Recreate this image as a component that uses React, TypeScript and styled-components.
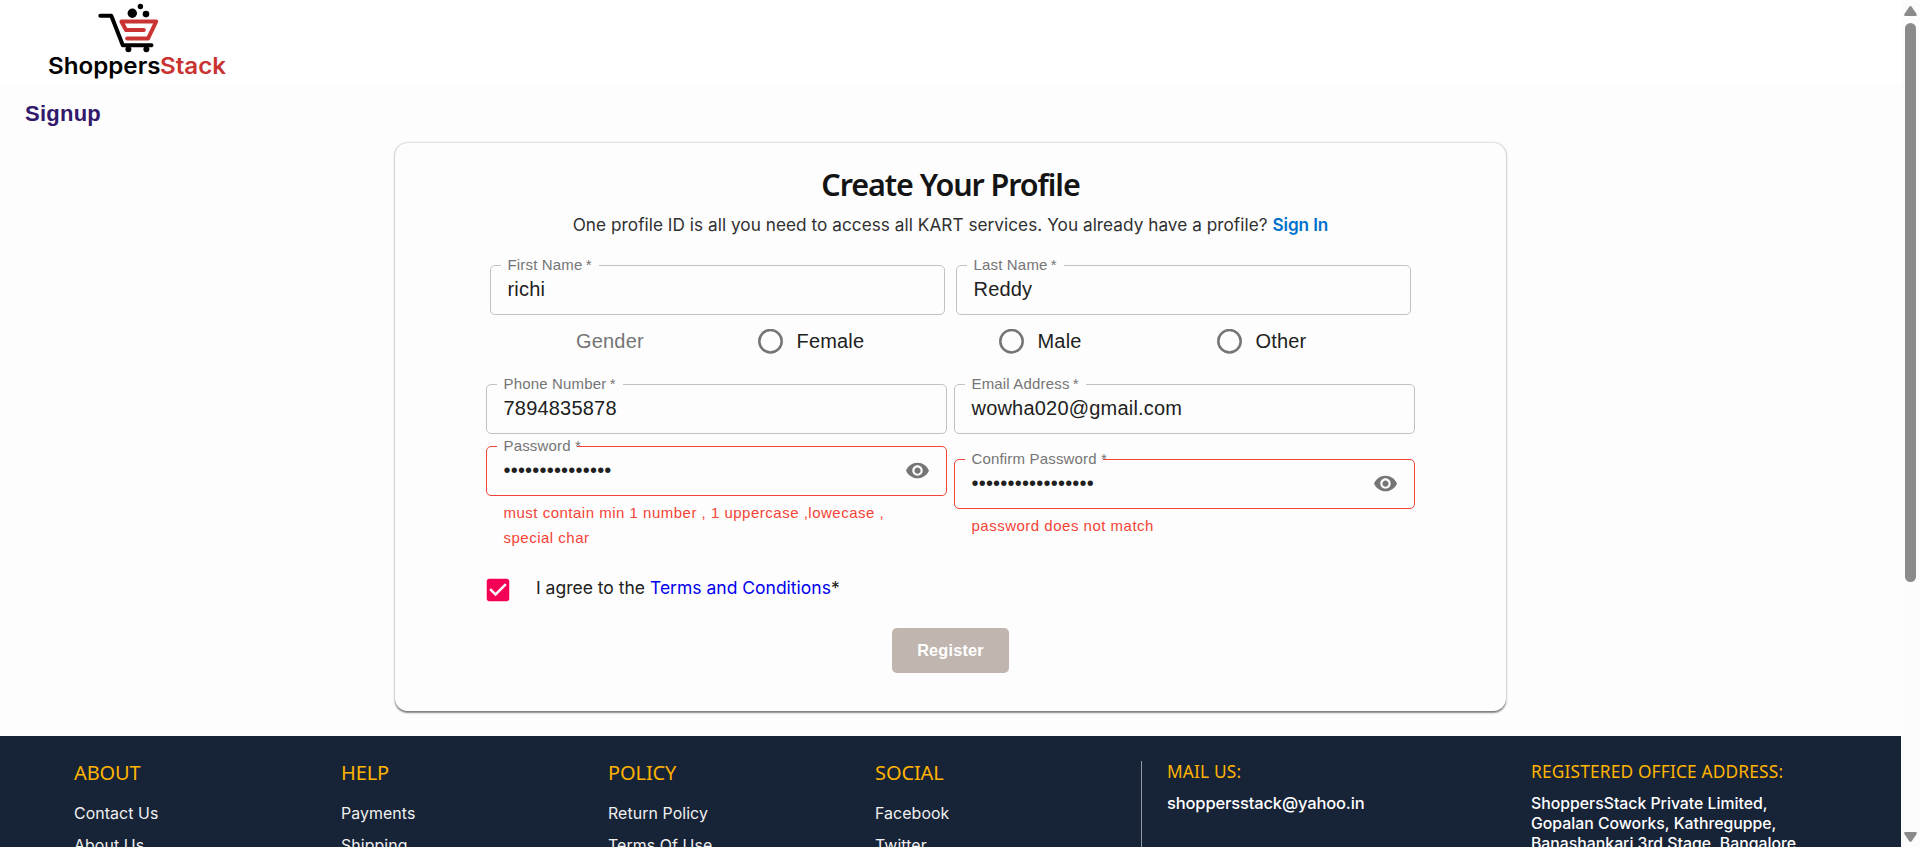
import React from 'react';
import styled, { createGlobalStyle } from 'styled-components';

const humanist = '"Noto Sans", "Open Sans", sans-serif';
const rounded = 'Inter, "Noto Sans", sans-serif';
const arial = '"Liberation Sans", Arial, sans-serif';

const GlobalStyle = createGlobalStyle`
  * { box-sizing: border-box; }
  body { margin: 0; background: #fdfdfd; font-family: ${arial}; overflow: hidden; }
`;

const Screen = styled.div`
  display: flex;
  width: 1920px;
  height: 847px;
  overflow: hidden;
`;

const Page = styled.div`
  width: 1901px;
  height: 847px;
  overflow: hidden;
  background: #fdfdfd;
`;

const Header = styled.header`
  height: 85px;
  background: #fff;
`;

const PageTitle = styled.h1`
  margin: 0;
  padding: 16px 0 0 25px;
  font: bold 22px/26px ${arial};
  letter-spacing: 0.25px;
  color: #33196b;
`;

const Card = styled.main`
  width: 1111px;
  margin: 16px auto 25px;
  padding: 21px 91px 38px;
  border-radius: 12.5px;
  background: #fdfdfd;
  box-shadow: 0 1.25px 1.5px rgba(0, 0, 0, 0.36), 0 0.5px 2.5px rgba(0, 0, 0, 0.3);
`;

const CardTitle = styled.h2`
  margin: 0 0 6px;
  text-align: center;
  font: 600 30.5px/41px ${humanist};
  letter-spacing: -1.08px;
  color: #141414;
`;

const Subtitle = styled.p`
  margin: 0 0 28px;
  text-align: center;
  font: 400 17.2px/27px ${rounded};
  height: 26px;
  letter-spacing: 0.04px;
  color: #303030;
  white-space: nowrap;
`;

const SignIn = styled.a`
  font-weight: 600;
  letter-spacing: -0.1px;
  color: #0070cc;
`;

const NameRow = styled.div`
  display: grid;
  grid-template-columns: 1fr 1fr;
  gap: 11px;
  padding: 0 4px;
`;

const GenderRow = styled.div`
  display: grid;
  grid-template-columns: 181.5px 241px 218px auto;
  align-items: center;
  height: 52px;
  padding-left: 90px;
  margin-bottom: 17px;
  font-size: 20px;
  letter-spacing: 0.18px;
`;

const GenderLabel = styled.span`
  color: #757575;
`;

const RadioOption = styled.label`
  display: flex;
  align-items: center;
  gap: 14px;
  color: #212121;
`;

const RadioCircle = styled.svg`
  width: 25px;
  height: 25px;
  fill: none;
  stroke: #757575;
  stroke-width: 2.5;
`;

const Columns = styled.div`
  display: grid;
  grid-template-columns: 1fr 1fr;
  gap: 7px;
  height: 166px;
  margin-bottom: 25px;
`;

const Column = styled.div<{ $gap: number }>`
  display: flex;
  flex-direction: column;
  gap: ${(p) => p.$gap}px;
`;

const FieldBox = styled.div<{ $error?: boolean }>`
  position: relative;
  display: flex;
  align-items: center;
  justify-content: space-between;
  height: 50px;
  padding: 0 16px 2px 16.5px;
  border: 1px solid ${(p) => (p.$error ? '#f44336' : '#c2c2c2')};
  border-radius: 5px;
`;

const Notch = styled.span<{ $width: number }>`
  position: absolute;
  top: -1px;
  left: 10px;
  width: ${(p) => p.$width}px;
  height: 2px;
  background: #fdfdfd;
`;

const FieldLabel = styled.span`
  position: absolute;
  top: -11px;
  left: 16.5px;
  font-size: 15px;
  line-height: 20px;
  letter-spacing: 0.17px;
  color: #757575;
  white-space: nowrap;
`;

const Value = styled.span`
  font-size: 20px;
  line-height: 28px;
  letter-spacing: 0.2px;
  color: #212121;
`;

const EyeIcon = styled.svg`
  width: 25px;
  height: 25px;
  margin-top: 1px;
  fill: #757575;
`;

const Helper = styled.p`
  margin: 4px 0 0 17.5px;
  width: 400px;
  font-size: 15px;
  line-height: 25px;
  letter-spacing: 0.5px;
  color: #f44336;
`;

const AgreeRow = styled.div`
  display: flex;
  height: 30px;
  margin: 0 0 23px -3px;
`;

const CheckIcon = styled.svg`
  width: 30px;
  height: 30px;
  margin-right: 23px;
  fill: #f50057;
`;

const AgreeText = styled.span`
  font: 400 17.5px/25px ${rounded};
  color: #212121;
`;

const TermsLink = styled.a`
  color: #0000ee;
`;

const RegisterButton = styled.button`
  display: block;
  width: 117px;
  height: 45px;
  margin: 0 auto;
  padding: 0;
  border: 0;
  border-radius: 5px;
  background: #c0b6af;
  color: #fff;
  font: bold 16.25px/45px ${arial};
  letter-spacing: 0.2px;
`;

const Footer = styled.footer`
  display: flex;
  height: 300px;
  padding: 25px 0 0 74px;
  background: #172337;
  color: #fff;
  font-family: ${rounded};
`;

const LinkColumn = styled.div`
  width: 267px;
`;

const LinkHeading = styled.h3`
  margin: 0 0 14px;
  font-family: ${humanist};
  font-weight: 400;
  font-size: 20px;
  line-height: 23px;
  letter-spacing: -0.1px;
  color: #ffb400;
`;

const FooterLink = styled.a`
  display: block;
  font-size: 15.9px;
  line-height: 32px;
  letter-spacing: 0.08px;
  color: #f0f0f0;
`;

const Contact = styled.div`
  display: grid;
  grid-template-columns: 364px 300px;
  padding-left: 25px;
  margin-left: -1px;
  border-left: 1px solid #9399a3;
`;

const ContactHeading = styled.h3`
  margin: 0;
  font-family: ${humanist};
  font-weight: 400;
  font-size: 17.3px;
  line-height: 21px;
  letter-spacing: 0.18px;
  color: #ffb400;
`;

const Mail = styled.p`
  margin: 11px 0 0;
  font-weight: 500;
  font-size: 16.5px;
  line-height: 21px;
  letter-spacing: -0.15px;
`;

const Address = styled.p`
  margin: 12px 0 0;
  font-weight: 500;
  font-size: 15.8px;
  line-height: 20px;
`;

const Scrollbar = styled.div`
  display: flex;
  flex-direction: column;
  align-items: center;
  width: 19px;
  height: 847px;
  padding: 6px 0 5px;
  background: #fcfcfc;
`;

const ScrollArrow = styled.svg`
  display: block;
  width: 13px;
  height: 10px;
  fill: #8b8b8b;
`;

const Thumb = styled.div`
  width: 11px;
  height: 559px;
  margin: 7px 0 auto;
  border-radius: 6px;
  background: #8b8b8b;
`;

type FieldProps = {
  label: string;
  value: string;
  notch: number;
  error?: boolean;
  secret?: boolean;
};

function Field({ label, value, notch, error, secret }: FieldProps) {
  return (
    <FieldBox $error={error}>
      <Notch $width={notch} />
      <FieldLabel>{label}{secret ? ' ' : '\u2009'}*</FieldLabel>
      <Value>{value}</Value>
      {secret && (
        <EyeIcon viewBox="0 0 24 24">
          <path d="M12 4.5C7 4.5 2.73 7.61 1 12c1.73 4.39 6 7.5 11 7.5s9.27-3.11 11-7.5c-1.73-4.39-6-7.5-11-7.5zM12 17c-2.76 0-5-2.24-5-5s2.24-5 5-5 5 2.24 5 5-2.24 5-5 5zm0-8c-1.66 0-3 1.34-3 3s1.34 3 3 3 3-1.34 3-3-1.34-3-3-3z" />
        </EyeIcon>
      )}
    </FieldBox>
  );
}

function Logo() {
  return (
    <svg width="240" height="85" viewBox="0 0 240 85">
      <g fill="none" strokeWidth="4" strokeLinecap="round" strokeLinejoin="round">
        <path stroke="#000" d="M100.3 15.8H111.3L122.8 45.2H151.5" />
        <path stroke="#c93331" d="M143.8 30H126L121.4 21.5H156.2L148 38.6H127.2" />
      </g>
      <circle cx="128.4" cy="49.2" r="3" />
      <circle cx="146.4" cy="49.2" r="3" />
      <circle cx="132.3" cy="13.3" r="4.7" />
      <circle cx="140.4" cy="6.5" r="2.7" />
      <circle cx="146" cy="14.1" r="3.3" />
      <g fontFamily="Inter, sans-serif" fontWeight="600" fontSize="22.8">
        <text x="48" y="74" textLength="112.5" lengthAdjust="spacingAndGlyphs">Shoppers</text>
        <text x="160" y="74" textLength="66" lengthAdjust="spacingAndGlyphs" fill="#c93331">Stack</text>
      </g>
    </svg>
  );
}

const linkColumns = [
  { title: 'ABOUT', links: ['Contact Us', 'About Us'] },
  { title: 'HELP', links: ['Payments', 'Shipping'] },
  { title: 'POLICY', links: ['Return Policy', 'Terms Of Use'] },
  { title: 'SOCIAL', links: ['Facebook', 'Twitter'] },
];

export default function App() {
  return (
    <Screen>
      <GlobalStyle />
      <Page>
        <Header><Logo /></Header>
        <PageTitle>Signup</PageTitle>
        <Card>
          <CardTitle>Create Your Profile</CardTitle>
          <Subtitle>
            One profile ID is all you need to access all KART services. You already have a profile?{' '}
            <SignIn>Sign In</SignIn>
          </Subtitle>
          <NameRow>
            <Field label="First Name" value="richi" notch={98} />
            <Field label="Last Name" value="Reddy" notch={97} />
          </NameRow>
          <GenderRow>
            <GenderLabel>Gender</GenderLabel>
            {['Female', 'Male', 'Other'].map((name) => (
              <RadioOption key={name}>
                <RadioCircle viewBox="0 0 25 25"><circle cx="12.5" cy="12.2" r="11.2" /></RadioCircle>
                {name}
              </RadioOption>
            ))}
          </GenderRow>
          <Columns>
            <Column $gap={12}>
              <Field label="Phone Number" value="7894835878" notch={126} />
              <div>
                <Field label="Password" value={'•'.repeat(15)} notch={80} error secret />
                <Helper>must contain min 1 number , 1 uppercase ,lowecase , special char</Helper>
              </div>
            </Column>
            <Column $gap={25}>
              <Field label="Email Address" value="wowha020@gmail.com" notch={121} />
              <div>
                <Field label="Confirm Password" value={'•'.repeat(17)} notch={138} error secret />
                <Helper>password does not match</Helper>
              </div>
            </Column>
          </Columns>
          <AgreeRow>
            <CheckIcon viewBox="0 0 24 24">
              <path d="M19 3H5c-1.11 0-2 .9-2 2v14c0 1.1.89 2 2 2h14c1.11 0 2-.9 2-2V5c0-1.1-.89-2-2-2zm-9 14l-5-5 1.41-1.41L10 14.17l7.59-7.59L19 8l-9 9z" />
            </CheckIcon>
            <AgreeText>I agree to the <TermsLink>Terms and Conditions</TermsLink>*</AgreeText>
          </AgreeRow>
          <RegisterButton>Register</RegisterButton>
        </Card>
        <Footer>
          {linkColumns.map((column) => (
            <LinkColumn key={column.title}>
              <LinkHeading>{column.title}</LinkHeading>
              {column.links.map((link) => <FooterLink key={link}>{link}</FooterLink>)}
            </LinkColumn>
          ))}
          <Contact>
            <div>
              <ContactHeading>MAIL US:</ContactHeading>
              <Mail>shoppersstack@yahoo.in</Mail>
            </div>
            <div>
              <ContactHeading>REGISTERED OFFICE ADDRESS:</ContactHeading>
              <Address>
                ShoppersStack Private Limited,<br />
                Gopalan Coworks, Kathreguppe,<br />
                Banashankari 3rd Stage, Bangalore
              </Address>
            </div>
          </Contact>
        </Footer>
      </Page>
      <Scrollbar>
        <ScrollArrow viewBox="0 0 13 10"><path d="M5.3.7Q6.5-.6 7.7.7L12.6 8Q13.3 10 11.5 10H1.5Q-.3 10 .4 8Z" /></ScrollArrow>
        <Thumb />
        <ScrollArrow viewBox="0 0 13 10"><path d="M5.3 9.3Q6.5 10.6 7.7 9.3L12.6 2Q13.3 0 11.5 0H1.5Q-.3 0 .4 2Z" /></ScrollArrow>
      </Scrollbar>
    </Screen>
  );
}
